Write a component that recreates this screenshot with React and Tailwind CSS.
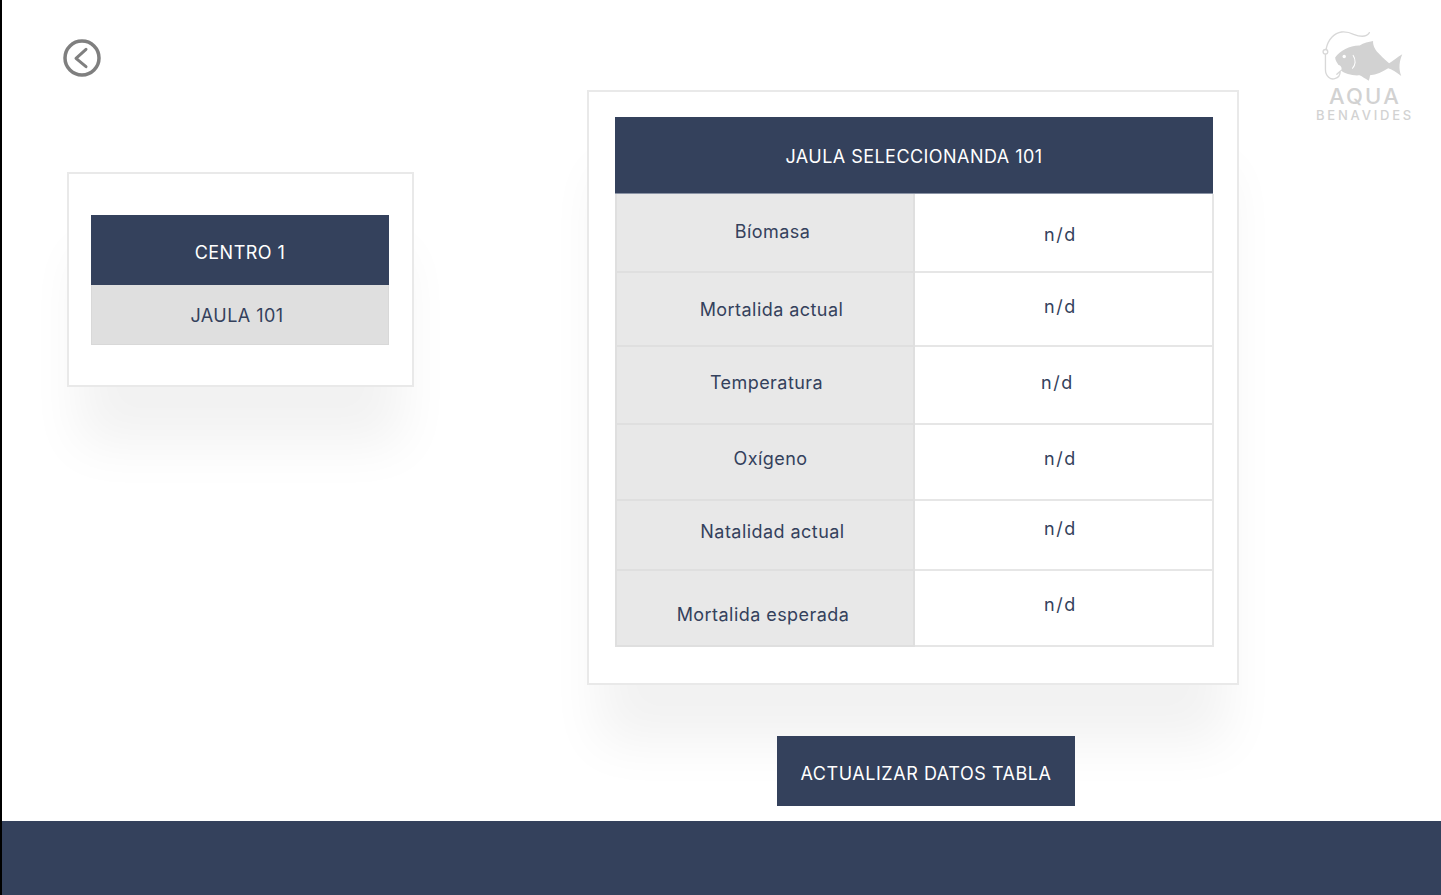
const rows = [
  { label: "Bíomasa", h: "h-[79px]", lc: "pl-[15px] pt-[26px]", vc: "pt-[29px] pr-[6px]" },
  { label: "Mortalida actual", h: "h-[74px]", lc: "pl-[13px] pt-[25px]", vc: "pt-[22px] pr-[6px]" },
  { label: "Temperatura", h: "h-[78px]", lc: "pl-[3px] pt-[24px]", vc: "pt-[24px] pr-[12px]" },
  { label: "Oxígeno", h: "h-[76px]", lc: "pl-[11px] pt-[22px]", vc: "pt-[22px] pr-[6px]" },
  { label: "Natalidad actual", h: "h-[70px]", lc: "pl-[15px] pt-[19px]", vc: "pt-[16px] pr-[6px]" },
  { label: "Mortalida esperada", h: "h-[76px]", lc: "pr-[4px] pt-[32px]", vc: "pt-[22px] pr-[6px]" },
];

function Row({ r }) {
  return (
    <div className={`flex ${r.h}`}>
      <div className={`w-[300px] shrink-0 bg-[#e8e8e8] border-l-2 border-r-2 border-b-2 border-[#dfdfdf] text-center ${r.lc}`}>
        {r.label}
      </div>
      <div className={`flex-1 bg-white border-r-2 border-b-2 border-[#e6e6e6] text-center tracking-[1.6px] ${r.vc}`}>n/d</div>
    </div>
  );
}

function Logo() {
  return (
    <div className="w-[100px] flex flex-col items-center text-[#d2d2d2]">
      <svg width="84" height="52" viewBox="60 25 250 155" className="self-start ml-[5px]">
        <path d="M105 107 C120 86 150 70 178 71 C190 64 205 60 218 58 C217 70 224 86 238 98 C249 110 258 118 266 124 C278 116 290 106 305 97 C297 116 293 138 302 162 C288 151 276 143 263 139 C246 150 228 158 209 160 C208 166 207 172 205 176 C194 170 186 164 178 160 C158 162 134 156 122 146 C127 139 123 131 115 129 C111 123 105 115 105 107 Z" fill="#d2d2d2" />
        <circle cx="132" cy="104" r="5" fill="#fff" />
        <path d="M158 100 C168 114 166 130 156 140" fill="none" stroke="#fff" strokeWidth="3" />
        <path d="M207 33 C196 50 173 43 160 38 C148 32 136 30 124 31 C104 34 84 50 78 82" fill="none" stroke="#d8d8d8" strokeWidth="4" strokeLinecap="round" />
        <circle cx="76" cy="90" r="7" fill="none" stroke="#d8d8d8" strokeWidth="4" />
        <path d="M76 97 L76 142 C76 164 92 174 104 170 C116 167 120 156 120 148 L110 157" fill="none" stroke="#d8d8d8" strokeWidth="4" strokeLinecap="round" />
      </svg>
      <div className="mt-[5px] text-[22px] leading-[18px] font-medium tracking-[2.2px]">AQUA</div>
      <div className="mt-[3px] text-[13px] leading-[14px] font-medium tracking-[2.8px] whitespace-nowrap">BENAVIDES</div>
    </div>
  );
}

export default function App() {
  return (
    <div className="relative w-[1441px] h-[895px] overflow-hidden bg-white pl-[2px] font-['Inter',sans-serif] text-[18px] leading-[24px] tracking-[0.45px] text-[#34415c]">
      <div className="absolute left-0 top-0 bottom-0 w-[2px] bg-black" />
      <div className="flex h-[821px]">
        <div className="w-[585px] shrink-0 pt-[39px] pl-[61px]">
          <svg width="38" height="38" viewBox="0 0 38 38" className="block">
            <circle cx="19" cy="19" r="17" fill="none" stroke="#7f7f7f" strokeWidth="3.5" />
            <path d="M23 10.3 L13 19.3 L23 27.7" fill="none" stroke="#7f7f7f" strokeWidth="3" strokeLinecap="round" strokeLinejoin="round" />
          </svg>
          <div className="mt-[95px] ml-[4px] w-[347px] h-[215px] border-2 border-[#e9e9e9] bg-white pt-[41px] pl-[22px] shadow-[0_70px_50px_-12px_rgba(0,0,0,0.055)]">
            <div className="w-[298px] h-[70px] bg-[#34415c] text-white text-center pt-[26px]">CENTRO 1</div>
            <div className="w-[298px] h-[60px] bg-[#dfdfdf] border border-t-0 border-[#d8d8d8] text-center pt-[19px] pr-[6px]">JAULA 101</div>
          </div>
        </div>
        <div className="w-[652px] shrink-0 pt-[90px]">
          <div className="w-[652px] h-[595px] border-2 border-[#e9e9e9] bg-white pt-[25px] pl-[26px] shadow-[0_70px_50px_-12px_rgba(0,0,0,0.055)]">
            <div className="w-[598px] h-[77px] bg-[#34415c] border-b border-[#8a93a5] text-white text-center pt-[28px]">JAULA SELECCIONANDA 101</div>
            <div className="w-[599px]">
              {rows.map((r) => (
                <Row key={r.label} r={r} />
              ))}
            </div>
          </div>
          <div className="relative mt-[51px] ml-[190px] w-[298px] h-[70px] bg-[#34415c] text-white text-center pt-[26px] tracking-[0.55px]">ACTUALIZAR DATOS TABLA</div>
        </div>
        <div className="pt-[30px] pl-[76px]">
          <Logo />
        </div>
      </div>
      <div className="h-[74px] bg-[#34415c]" />
    </div>
  );
}
